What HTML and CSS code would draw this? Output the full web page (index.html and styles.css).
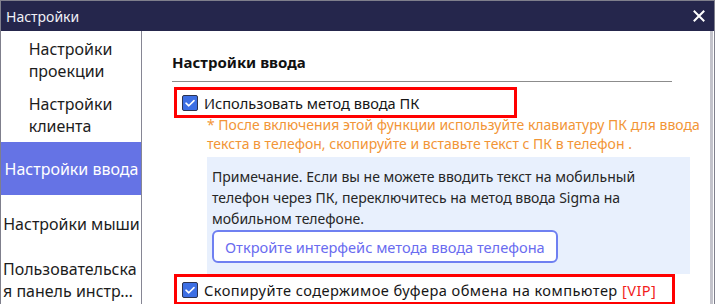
FILE: index.html
```html
<!DOCTYPE html>
<html lang="ru">
<head>
    <meta charset="UTF-8">
    <title>Настройки</title>
    <link rel="stylesheet" href="styles.css">
</head>
<body>
    <div class="window">
        <div class="titlebar">
            <span class="title">Настройки</span>
            <svg class="close" width="12" height="12" viewBox="0 0 12 12">
                <path d="M1.5 1.5 L10.5 10.5 M10.5 1.5 L1.5 10.5" stroke="#fff" stroke-width="2" stroke-linecap="square"/>
            </svg>
        </div>
        <div class="main">
            <div class="sidebar">
                <div class="nav-item"><span class="nav-text wrap">Настройки проекции</span></div>
                <div class="nav-item"><span class="nav-text wrap">Настройки клиента</span></div>
                <div class="nav-item active"><span class="nav-text">Настройки ввода</span></div>
                <div class="nav-item"><span class="nav-text">Настройки мыши</span></div>
                <div class="nav-item"><span class="nav-text clamp">Пользовательская панель инструментов</span></div>
            </div>
            <div class="content">
                <h2 class="section-title">Настройки ввода</h2>

                <div class="check-row first">
                    <span class="checkbox">
                        <svg width="16" height="16" viewBox="0 0 16 16">
                            <path d="M4 8.2 L6.8 10.8 L12 5.6" fill="none" stroke="#fff" stroke-width="1.6" stroke-linecap="round" stroke-linejoin="round"/>
                        </svg>
                    </span>
                    <span class="check-label">Использовать метод ввода ПК</span>
                </div>

                <p class="hint">* После включения этой функции используйте клавиатуру ПК для ввода текста в телефон, скопируйте и вставьте текст с ПК в телефон .</p>

                <div class="note">
                    <p class="note-text">Примечание. Если вы не можете вводить текст на мобильный телефон через ПК, переключитесь на метод ввода Sigma на мобильном телефоне.</p>
                    <button class="note-btn">Откройте интерфейс метода ввода телефона</button>
                </div>

                <div class="check-row second">
                    <span class="checkbox">
                        <svg width="16" height="16" viewBox="0 0 16 16">
                            <path d="M4 8.2 L6.8 10.8 L12 5.6" fill="none" stroke="#fff" stroke-width="1.6" stroke-linecap="round" stroke-linejoin="round"/>
                        </svg>
                    </span>
                    <span class="check-label wide">Скопируйте содержимое буфера обмена на компьютер <span class="vip">[VIP]</span></span>
                </div>
            </div>
            <div class="scrollbar"></div>
        </div>
    </div>
</body>
</html>
```

FILE: styles.css
```css
body {
    margin: 0;
    width: 715px;
    height: 304px;
    overflow: hidden;
    background-color: #fff;
    font-family: "Noto Sans", "Open Sans", sans-serif;
    color: #1c1c1c;
}

.window {
    display: flex;
    flex-direction: column;
    height: 304px;
    border: 1px solid #7f7f8c;
    border-bottom: none;
    box-sizing: border-box;
}

.titlebar {
    height: 30px;
    flex-shrink: 0;
    background-color: #25264c;
    display: flex;
    align-items: center;
    justify-content: space-between;
    padding: 0 9px 0 5px;
}

.title {
    color: #f0f0f6;
    font-size: 14px;
    padding-top: 1px;
}

.close {
    display: block;
}

.main {
    flex: 1;
    display: flex;
    overflow: hidden;
}

.sidebar {
    width: 140px;
    flex-shrink: 0;
    border-right: 1px solid #868694;
    padding-top: 1px;
}

.nav-item {
    height: 53px;
    margin-bottom: 2px;
    display: flex;
    align-items: center;
    justify-content: center;
    padding: 0 1px 0 2px;
    font-size: 16px;
    line-height: 22px;
}

.nav-item.active {
    background-color: #6573e5;
    color: #fff;
}

.nav-text {
    display: block;
    text-align: left;
}

.nav-text.wrap {
    width: min-content;
    padding-top: 2px;
    margin-left: -2px;
}

.nav-text.clamp {
    word-break: break-all;
    display: -webkit-box;
    -webkit-line-clamp: 2;
    -webkit-box-orient: vertical;
    overflow: hidden;
    padding-top: 3px;
}

.content {
    flex: 1;
    padding: 20px 0 0 30px;
    min-width: 0;
}

.section-title {
    width: 500px;
    margin: 0;
    font-size: 15px;
    font-weight: bold;
    line-height: 22px;
    padding-bottom: 8px;
    border-bottom: 1px solid #8c8c8c;
    color: #111;
}

.check-row {
    display: flex;
    align-items: center;
    gap: 6px;
    height: 25px;
    margin-left: 5px;
    padding-left: 5px;
    box-sizing: border-box;
    outline: 3px solid #f00;
    font-size: 14.6px;
}

.check-row.first {
    width: 337px;
    margin-top: 8px;
}

.check-row.second {
    width: 495px;
    margin-top: 3px;
}

.checkbox {
    width: 16px;
    height: 16px;
    box-sizing: border-box;
    background-color: #3d6fe4;
    border: 1px solid #2c3350;
    border-radius: 2px;
    display: flex;
    align-items: center;
    justify-content: center;
    flex-shrink: 0;
}

.checkbox svg {
    display: block;
    margin: -1px;
}

.check-label {
    white-space: nowrap;
    color: #161616;
    padding-top: 1px;
}

.check-label.wide {
    letter-spacing: 0.45px;
}

.vip {
    color: #f21c1c;
}

.hint {
    margin: 0 0 4px 35px;
    font-size: 14px;
    line-height: 19px;
    color: #f29536;
}

.note {
    margin-left: 35px;
    width: 483px;
    box-sizing: border-box;
    background-color: #e8f0fd;
    padding: 9px 5px 11px 5px;
}

.note-text {
    margin: 0 0 1px 0;
    font-size: 14px;
    line-height: 21px;
    color: #262626;
}

.note-btn {
    height: 33px;
    padding: 0 11px;
    background-color: #fff;
    border: 2px solid #6f80f1;
    border-radius: 6px;
    font-family: "Noto Sans", "Open Sans", sans-serif;
    font-size: 14.6px;
    color: #6a6cf0;
}

.scrollbar {
    width: 3px;
    flex-shrink: 0;
    background-color: #c3c3cb;
    margin: 0 1px 0 0;
}
```
